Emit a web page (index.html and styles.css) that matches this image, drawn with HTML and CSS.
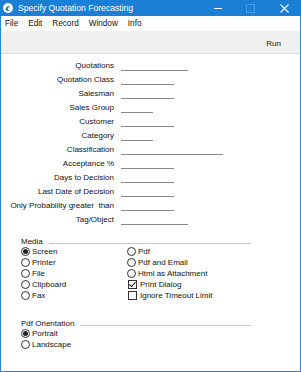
FILE: index.html
```html
<!DOCTYPE html>
<html>
<head>
<meta charset="utf-8">
<link rel="stylesheet" href="styles.css">
</head>
<body>
<div class="window">
  <div class="titlebar">
    <svg class="app-icon" width="10" height="10" viewBox="0 0 10 10">
      <circle cx="5" cy="5" r="5" fill="#fff"/>
      <path d="M2.5 6.5 C3 3.5 6 2.5 7.5 4 C6 3.8 4.6 4.6 4.8 6 C5 7 6.5 7.3 7.3 6.6 C6.5 8.3 3.4 8.6 2.5 6.5 Z" fill="#1c6fc0"/>
    </svg>
    <span class="title">Specify Quotation Forecasting</span>
    <div class="controls">
      <span class="ctl min"></span>
      <span class="ctl max"></span>
      <svg class="ctl close" width="9" height="9" viewBox="0 0 9 9"><path d="M0.5 0.5 L8.5 8.5 M8.5 0.5 L0.5 8.5" stroke="#fff" stroke-width="1.1"/></svg>
    </div>
  </div>
  <div class="menubar">
    <span>File</span><span>Edit</span><span>Record</span><span>Window</span><span>Info</span>
  </div>
  <div class="toolbar"><span class="run">Run</span></div>
  <div class="content">
    <div class="form">
      <label>Quotations</label><span class="field w67"></span>
      <label>Quotation Class</label><span class="field w53"></span>
      <label>Salesman</label><span class="field w53"></span>
      <label>Sales Group</label><span class="field w32"></span>
      <label>Customer</label><span class="field w53"></span>
      <label>Category</label><span class="field w32"></span>
      <label>Classification</label><span class="field w102"></span>
      <label>Acceptance %</label><span class="field w53"></span>
      <label>Days to Decision</label><span class="field w53"></span>
      <label>Last Date of Decision</label><span class="field w53"></span>
      <label>Only Probability greater&nbsp; than</label><span class="field w53"></span>
      <label>Tag/Object</label><span class="field w67"></span>
    </div>

    <div class="section media">
      <div class="sec-head"><span>Media</span><span class="rule"></span></div>
      <div class="cols">
        <div class="col">
          <div class="opt"><span class="radio on"></span>Screen</div>
          <div class="opt"><span class="radio"></span>Printer</div>
          <div class="opt"><span class="radio"></span>File</div>
          <div class="opt"><span class="radio"></span>Clipboard</div>
          <div class="opt"><span class="radio"></span>Fax</div>
        </div>
        <div class="col col2">
          <div class="opt"><span class="radio"></span>Pdf</div>
          <div class="opt"><span class="radio"></span>Pdf and Email</div>
          <div class="opt"><span class="radio"></span>Html as Attachment</div>
          <div class="opt"><span class="check"><svg width="9" height="9" viewBox="0 0 9 9"><path d="M1.5 4.5 L3.6 6.6 L7.6 2" fill="none" stroke="#222" stroke-width="1.1"/></svg></span>Print Dialog</div>
          <div class="opt"><span class="check"></span>Ignore Timeout Limit</div>
        </div>
      </div>
    </div>

    <div class="section orient">
      <div class="sec-head"><span>Pdf Orientation</span><span class="rule"></span></div>
      <div class="col">
        <div class="opt"><span class="radio on"></span>Portrait</div>
        <div class="opt"><span class="radio"></span>Landscape</div>
      </div>
    </div>
  </div>
</div>
</body>
</html>
```

FILE: styles.css
```css
html, body {
  margin: 0;
  padding: 0;
  background: #fff;
}
body {
  font-family: "Liberation Sans", Arial, sans-serif;
  font-size: 8px;
  color: #111;
}
.window {
  width: 301px;
  height: 372px;
  box-sizing: border-box;
  border: 1px solid #2b86d6;
  border-top: 0;
  display: flex;
  flex-direction: column;
  background: #fff;
}
.titlebar {
  height: 16px;
  margin: 0 -1px;
  background: #1c7fd6;
  display: flex;
  align-items: center;
  color: #fff;
}
.app-icon {
  margin-left: 3px;
  margin-right: 5px;
}
.title {
  font-size: 8.6px;
  flex: 1;
}
.controls {
  display: flex;
  align-items: center;
  height: 16px;
}
.ctl {
  display: block;
}
.min {
  width: 8px;
  height: 1px;
  background: #fff;
  margin-right: 24px;
}
.max {
  width: 7px;
  height: 7px;
  border: 1px solid #4d9de0;
  margin-right: 25px;
}
.close {
  margin-right: 12px;
}
.menubar {
  height: 15px;
  display: flex;
  align-items: center;
  gap: 10px;
  padding-left: 4px;
  font-size: 8.2px;
}
.toolbar {
  height: 22px;
  background: #f0f0f0;
  border-bottom: 1px solid #dcdcdc;
  display: flex;
  align-items: center;
  justify-content: flex-end;
  padding-right: 19px;
}
.run {
  padding-top: 2px;
}
.content {
  flex: 1;
  padding-top: 4px;
}
.form {
  display: grid;
  grid-template-columns: 113px auto;
  column-gap: 7px;
  grid-auto-rows: 14px;
  align-items: center;
  justify-items: start;
}
.form label {
  justify-self: end;
}
.field {
  display: block;
  height: 9px;
  border-bottom: 1px solid #888;
  margin-top: 1px;
}
.w32 { width: 32px; }
.w53 { width: 53px; }
.w67 { width: 67px; }
.w102 { width: 102px; }

.section {
  padding-left: 20px;
}
.media {
  margin-top: 11px;
}
.orient {
  margin-top: 18px;
}
.sec-head {
  display: flex;
  align-items: center;
  height: 9px;
  width: 230px;
}
.rule {
  flex: 1;
  height: 1px;
  background: #c8c8c8;
  margin-left: 6px;
  margin-top: 3px;
}
.cols {
  display: flex;
}
.col {
  display: flex;
  flex-direction: column;
  width: 106px;
}
.opt {
  height: 11px;
  display: flex;
  align-items: center;
}
.radio {
  width: 9px;
  height: 9px;
  box-sizing: border-box;
  border: 1px solid #333;
  border-radius: 50%;
  margin-right: 2px;
  display: flex;
  align-items: center;
  justify-content: center;
}
.radio.on::after {
  content: "";
  width: 5px;
  height: 5px;
  border-radius: 50%;
  background: #222;
}
.check {
  width: 9px;
  height: 9px;
  box-sizing: border-box;
  border: 1px solid #333;
  margin-left: 1px;
  margin-right: 3px;
  display: flex;
  align-items: center;
  justify-content: center;
  background: #fff;
}
.check svg {
  display: block;
  flex: none;
}
```
